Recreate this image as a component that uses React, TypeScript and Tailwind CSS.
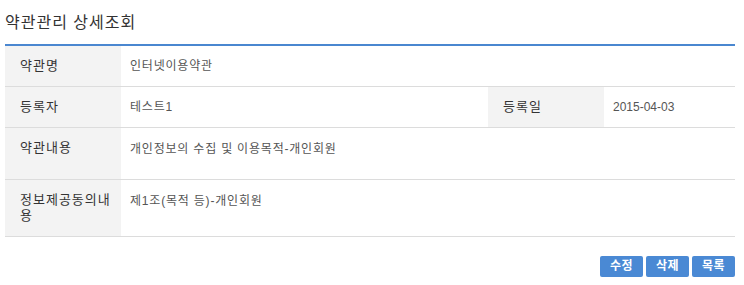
const font = "font-['Liberation_Sans','Noto_Sans_CJK_KR',sans-serif]";

function Label({ children, className = "" }: { children: React.ReactNode; className?: string }) {
  return (
    <div className={`w-[116px] shrink-0 bg-[#f3f3f3] pl-[15px] pr-[9px] text-[13px] leading-[16px] tracking-[1px] text-[#333] ${className}`}>
      {children}
    </div>
  );
}

function Value({ children, className = "" }: { children: React.ReactNode; className?: string }) {
  return <div className={`pl-[9px] text-[12px] leading-[16px] tracking-[0.8px] text-[#555] ${className}`}>{children}</div>;
}

export default function App() {
  return (
    <div className={`bg-white w-[744px] h-[285px] ${font}`}>
      <div className="ml-[5px] w-[730px]">
        <h2 className="h-[44px] pt-[11px] text-[16px] leading-[24px] tracking-[1px] text-[#333] font-normal">약관관리 상세조회</h2>
        <div className="border-t-2 border-[#4a87d0]">
          <div className="flex h-[41px] border-b border-[#dcdcdc]">
            <Label className="flex items-center">약관명</Label>
            <Value className="flex items-center">인터넷이용약관</Value>
          </div>
          <div className="flex h-[41px] border-b border-[#dcdcdc]">
            <Label className="flex items-center">등록자</Label>
            <Value className="flex items-center flex-1 text-[#8b6a3e]">테스트1</Value>
            <Label className="flex items-center pl-[13px]">등록일</Label>
            <Value className="flex items-center w-[131px] tracking-normal">2015-04-03</Value>
          </div>
          <div className="flex h-[52px] border-b border-[#dcdcdc]">
            <Label className="pt-[12px]">약관내용</Label>
            <Value className="pt-[13px]">개인정보의 수집 및 이용목적-개인회원</Value>
          </div>
          <div className="flex h-[57px] border-b border-[#dcdcdc]">
            <Label className="pt-[12px]">정보제공동의내용</Label>
            <Value className="pt-[13px]">제1조(목적 등)-개인회원</Value>
          </div>
        </div>
        <div className="mt-[19px] flex justify-end gap-[3px]">
          {["수정", "삭제", "목록"].map((t) => (
            <button
              key={t}
              className="w-[43px] h-[21px] rounded-[2px] bg-[#4a89d4] text-white text-[12px] font-bold leading-[21px] tracking-[0.5px]"
            >
              {t}
            </button>
          ))}
        </div>
      </div>
    </div>
  );
}
